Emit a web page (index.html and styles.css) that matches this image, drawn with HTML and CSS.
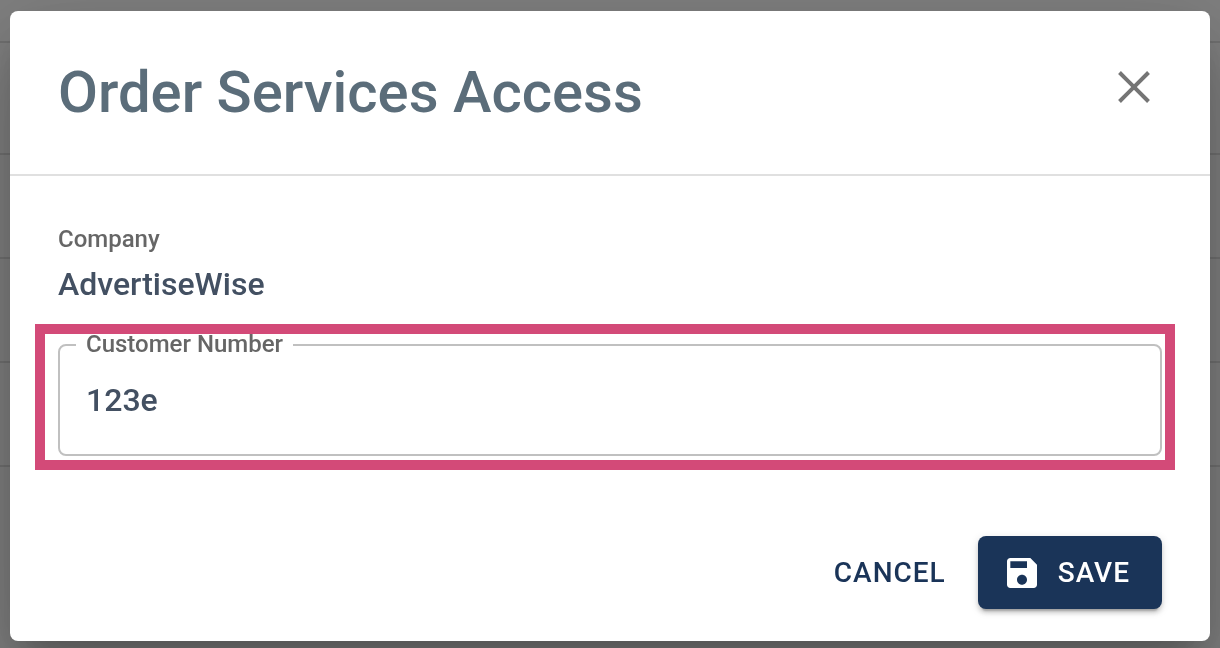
FILE: index.html
```
<!doctype html>
<html lang="en">
<head>
    <meta charset="utf-8">
    <meta name="viewport" content="width=device-width, initial-scale=1">
    <title>Order Services Access</title>
    <link rel="stylesheet" href="styles.css">
</head>
<body>

    <div class="page-rows">
        <div class="row row-first"></div>
        <div class="row row-head"></div>
        <div class="row"></div>
        <div class="row"></div>
        <div class="row"></div>
    </div>

    <div class="backdrop">
        <form class="dialog" role="dialog" aria-labelledby="dialog-title">
            <header class="dialog-header">
                <h1 id="dialog-title">Order Services Access</h1>
                <button type="button" class="close-btn" aria-label="Close">
                    <svg viewBox="0 0 48 48" width="48" height="48">
                        <path d="M9.500 9.500L38.500 38.500M38.500 9.500L9.500 38.500"/>
                    </svg>
                </button>
            </header>

            <div class="dialog-content">
                <div class="company-label">Company</div>
                <div class="company-name">AdvertiseWise</div>

                <div class="highlight">
                    <fieldset class="field">
                        <legend><label for="customer-number">Customer Number</label></legend>
                        <input type="text" id="customer-number" value="123e">
                    </fieldset>
                </div>
            </div>

            <footer class="dialog-actions">
                <button type="button" class="btn">CANCEL</button>
                <button type="submit" class="btn btn-save">
                    <svg viewBox="0 0 24 24" width="40" height="40">
                        <path d="M17 3H5c-1.110 0-2 .9-2 2v14c0 1.100.890 2 2 2h14c1.100 0 2-.9 2-2V7l-4-4zm-5 16c-1.660 0-3-1.340-3-3s1.340-3 3-3 3 1.340 3 3-1.340 3-3 3zm3-10H5V5h10v4z"/>
                    </svg>
                    <span>SAVE</span>
                </button>
            </footer>
        </form>
    </div>

</body>
</html>
```

FILE: styles.css
```
* {
    box-sizing: border-box;
    margin: 0;
    padding: 0;
}

body {
    background-color: #fff;
    font-family: Roboto, "Liberation Sans", sans-serif;
    font-weight: 500;
    overflow: hidden;
}

/* table behind the dialog */
.row {
    height: 104px;
    border-bottom: 2px solid #e0e0e0;
}

.row-first {
    height: 43px;
}

.row-head {
    height: 112px;
}

.backdrop {
    position: fixed;
    inset: 0;
    padding: 11px 10px 7px;
    background-color: rgba(0, 0, 0, 0.5);
}

.dialog {
    background-color: #fff;
    border-radius: 8px;
    box-shadow: 0 22px 30px -14px rgba(0, 0, 0, 0.2),
                0 48px 76px 6px rgba(0, 0, 0, 0.14),
                0 18px 92px 16px rgba(0, 0, 0, 0.12);
}

.dialog-header {
    display: flex;
    align-items: center;
    justify-content: space-between;
    padding: 48px;
    border-bottom: 2px solid #e0e0e0;
}

.dialog-header h1 {
    font-size: 58px;
    line-height: 67px;
    font-weight: 500;
    color: #5b6d7a;
}

.close-btn {
    display: flex;
    align-self: flex-start;
    padding: 4px;
    border: none;
    background: none;
    cursor: pointer;
}

.close-btn svg {
    fill: none;
    stroke: #757575;
    stroke-width: 4;
}

.dialog-content {
    padding: 48px 48px 0;
}

.company-label {
    font-size: 24px;
    line-height: 30px;
    color: #666;
}

.company-name {
    font-size: 32px;
    line-height: 60px;
    color: #435062;
}

/* pink frame around the field */
.highlight {
    margin: 10px -13px 0 -23px;
    padding: 0 3px 4px 13px;
    border: 10px solid #d34a78;
}

.field {
    padding: 0 16px;
    border: 2px solid #c0c0c0;
    border-radius: 8px;
}

.field legend {
    padding: 0 10px 2px;
    font-size: 24px;
    line-height: 20px;
    color: #666;
}

.field input {
    display: block;
    width: 100%;
    height: 98px;
    padding: 0 10px 10px;
    border: none;
    outline: none;
    background: none;
    font: inherit;
    font-size: 32px;
    color: #435062;
}

.dialog-actions {
    display: flex;
    justify-content: flex-end;
    gap: 16px;
    padding: 66px 48px 32px;
}

.btn {
    display: flex;
    align-items: center;
    gap: 16px;
    height: 73px;
    padding: 0 16px;
    border: none;
    border-radius: 8px;
    background: none;
    font: inherit;
    font-size: 28px;
    letter-spacing: 1px;
    color: #1a3458;
    cursor: pointer;
}

.btn-save {
    padding: 0 32px 0 24px;
    background-color: #1a3458;
    color: #fff;
    box-shadow: 0 6px 2px -4px rgba(0, 0, 0, 0.2),
                0 4px 4px 0 rgba(0, 0, 0, 0.14),
                0 2px 10px 0 rgba(0, 0, 0, 0.12);
}

.btn-save svg {
    fill: #fff;
}
```
